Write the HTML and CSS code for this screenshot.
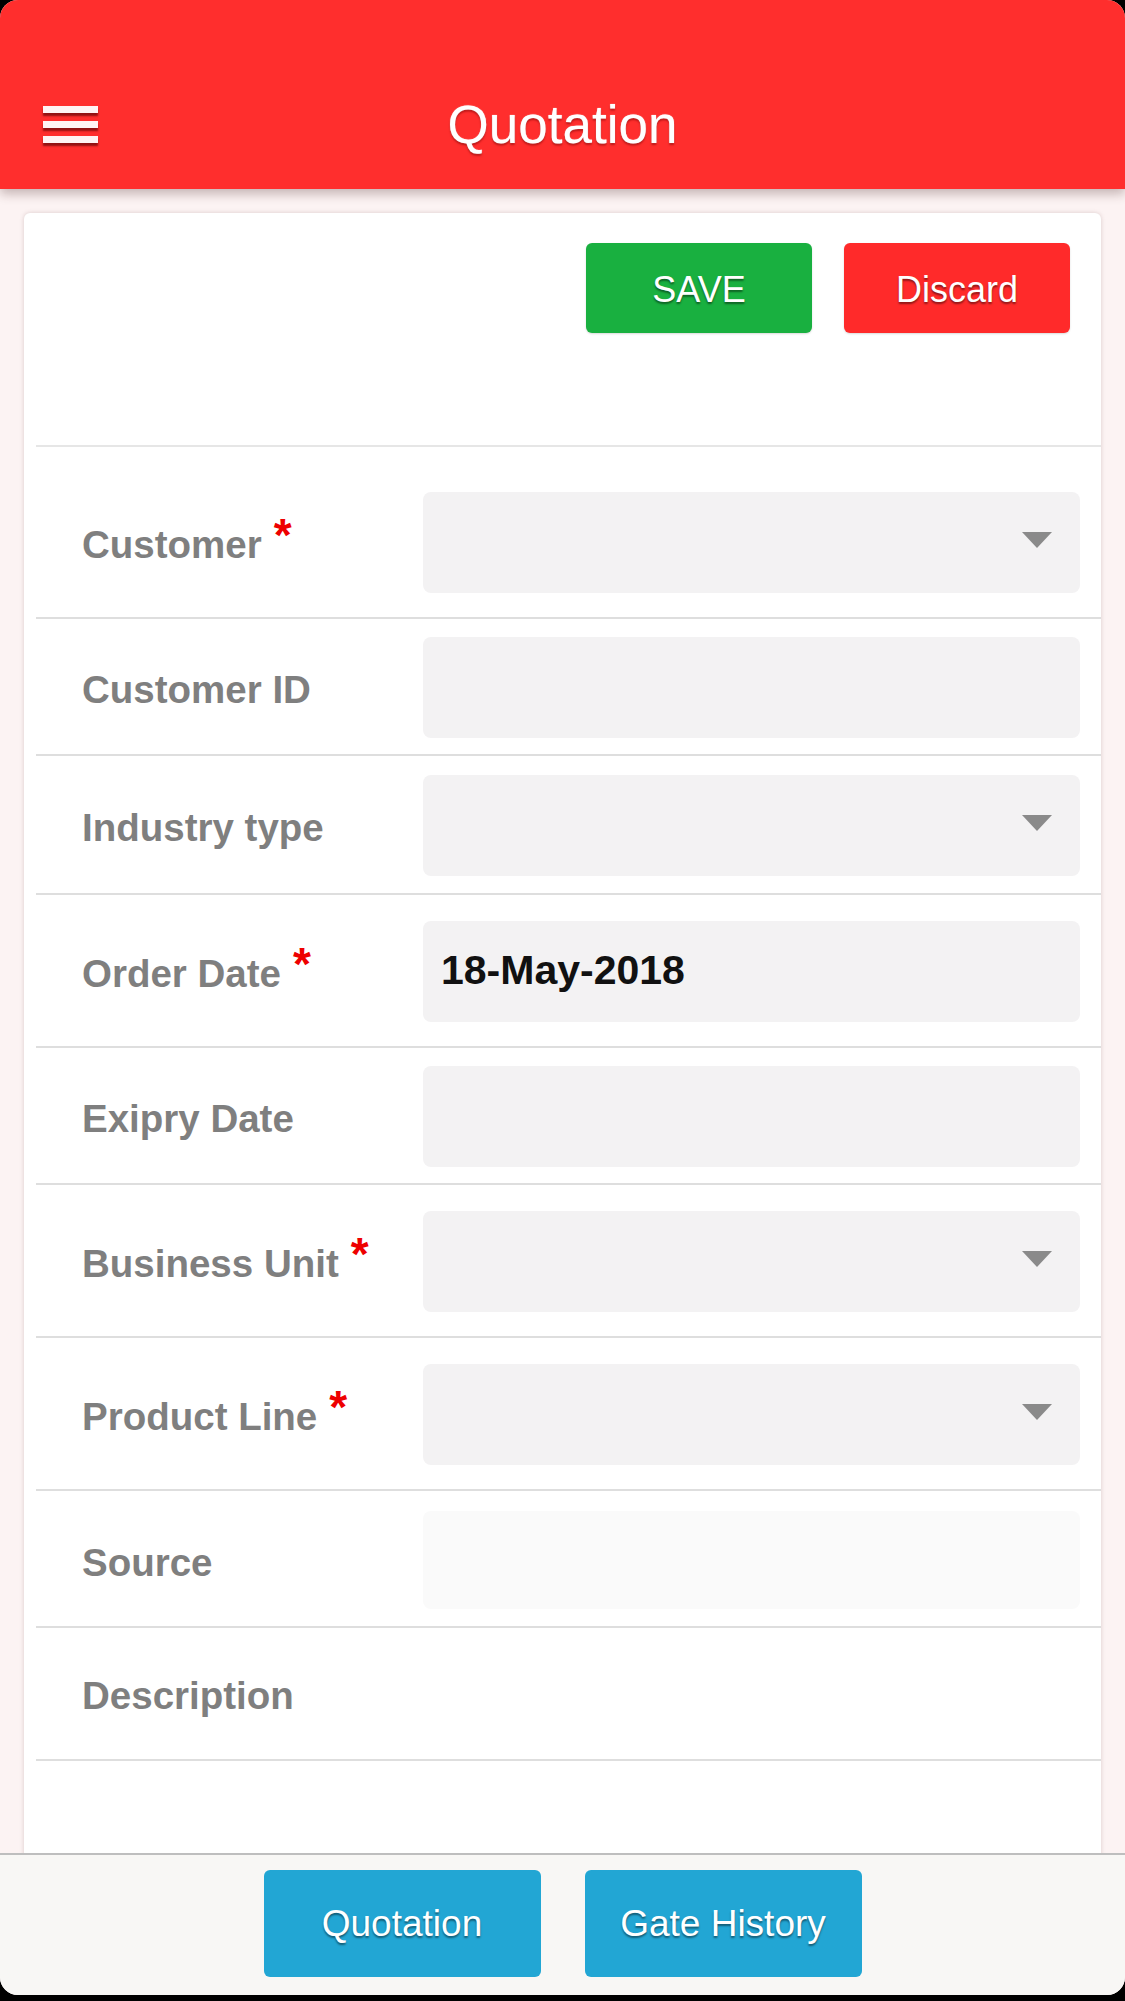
FILE: index.html
```html
<!DOCTYPE html>
<html lang="en">
<head>
<meta charset="utf-8">
<title>Quotation</title>
<link rel="stylesheet" href="styles.css">
</head>
<body>
<div class="screen">
  <header class="topbar">
    <button class="menu" aria-label="Menu"><span></span><span></span><span></span></button>
    <h1 class="topbar__title">Quotation</h1>
    <span class="topbar__spacer"></span>
  </header>

  <main class="content">
    <section class="card">
      <div class="actions">
        <button class="btn btn--save">SAVE</button>
        <button class="btn btn--discard">Discard</button>
      </div>

      <div class="fields">
        <div class="field field--req">
          <label class="field__label">Customer<sup class="req">*</sup></label>
          <div class="input input--select"><svg class="caret" viewBox="0 0 30 16"><polygon points="0,0 30,0 15,16"/></svg></div>
        </div>
        <div class="field">
          <label class="field__label">Customer ID</label>
          <div class="input"></div>
        </div>
        <div class="field field--wide">
          <label class="field__label">Industry type</label>
          <div class="input input--select"><svg class="caret" viewBox="0 0 30 16"><polygon points="0,0 30,0 15,16"/></svg></div>
        </div>
        <div class="field field--req">
          <label class="field__label">Order Date<sup class="req">*</sup></label>
          <div class="input input--value">18-May-2018</div>
        </div>
        <div class="field">
          <label class="field__label">Exipry Date</label>
          <div class="input"></div>
        </div>
        <div class="field field--req">
          <label class="field__label">Business Unit<sup class="req">*</sup></label>
          <div class="input input--select"><svg class="caret" viewBox="0 0 30 16"><polygon points="0,0 30,0 15,16"/></svg></div>
        </div>
        <div class="field field--req">
          <label class="field__label">Product Line<sup class="req">*</sup></label>
          <div class="input input--select"><svg class="caret" viewBox="0 0 30 16"><polygon points="0,0 30,0 15,16"/></svg></div>
        </div>
        <div class="field field--disabled">
          <label class="field__label">Source</label>
          <div class="input input--disabled"></div>
        </div>
        <div class="field field--text">
          <label class="field__label">Description</label>
        </div>
      </div>
    </section>
  </main>

  <footer class="tabbar">
    <button class="tab">Quotation</button>
    <button class="tab">Gate History</button>
  </footer>
</div>
</body>
</html>
```

FILE: styles.css
```css
* { box-sizing: border-box; }

html, body {
  margin: 0;
  padding: 0;
  background: #000;
}

body {
  font-family: "Liberation Sans", Arial, Helvetica, sans-serif;
}

.screen {
  width: 1125px;
  height: 1995px;
  border-radius: 18px;
  overflow: hidden;
  background: #fcf3f3;
  display: flex;
  flex-direction: column;
}

/* ---------- top bar ---------- */
.topbar {
  position: relative;
  z-index: 2;
  flex: 0 0 189px;
  background: #ff2e2d;
  box-shadow: 0 5px 10px rgba(60, 20, 20, 0.28);
  display: grid;
  grid-template-columns: 1fr auto 1fr;
  align-items: center;
  padding: 60px 0 0 43px;
}

.menu {
  width: 56px;
  height: 44px;
  padding: 0;
  border: 0;
  background: transparent;
  display: flex;
  flex-direction: column;
  justify-content: center;
  gap: 8px;
}

.menu span {
  display: block;
  width: 55px;
  height: 7px;
  background: #fff4f4;
  box-shadow: 0 3px 2px rgba(110, 10, 10, 0.75);
}

.topbar__title {
  margin: 0 43px 0 0;
  color: #fff;
  font-size: 53px;
  font-weight: normal;
  line-height: 1;
  text-shadow: 0 2px 2px rgba(120, 0, 0, 0.5), 0 0 1px rgba(255, 255, 255, 0.9);
}

/* ---------- content ---------- */
.content {
  flex: 1 1 auto;
  min-height: 0;
  overflow: hidden;
  padding: 24px 24px 0 24px;
}

.card {
  background: #fff;
  border-radius: 6px;
  box-shadow: 0 0 4px rgba(120, 80, 80, 0.25);
  padding-bottom: 200px;
}

.actions {
  display: flex;
  justify-content: flex-end;
  gap: 32px;
  padding: 30px 31px 112px 0;
}

.btn {
  width: 226px;
  height: 90px;
  border: 0;
  border-radius: 6px;
  color: #fff;
  font-family: inherit;
  font-size: 36px;
  padding-top: 4px;
  text-shadow: 0 2px 2px rgba(0, 0, 0, 0.45);
  box-shadow: 0 1px 2px rgba(0, 0, 0, 0.15);
}

.btn--save { background: #19b040; }
.btn--discard { background: #ff2a2a; }

.fields {
  margin-left: 12px;
  border-top: 2px solid #e6e6e6;
  padding-top: 19px;
}

.field {
  display: grid;
  grid-template-columns: 341px 1fr;
  align-items: center;
  padding: 18px 21px 16px 46px;
  border-bottom: 2px solid #dedede;
}

.field--wide {
  padding-top: 19px;
  padding-bottom: 17px;
}

.field--req {
  padding-top: 26px;
  padding-bottom: 24px;
}

.field--disabled {
  padding-top: 20px;
  padding-bottom: 17px;
}

.field--text {
  height: 133px;
  padding-top: 0;
  padding-bottom: 0;
}

.field__label {
  color: #7f7f7f;
  font-size: 38.5px;
  font-weight: bold;
  line-height: 1.15;
  padding-top: 6px;
}

.req {
  color: #ee0000;
  font-size: 46px;
  line-height: 0;
  margin-left: 12px;
  vertical-align: 7px;
}

.input {
  height: 101px;
  border-radius: 8px;
  background: #f3f2f3;
  display: flex;
  align-items: center;
  padding: 0 28px 0 18px;
}

.input--select { justify-content: flex-end; }

.input--disabled {
  height: 98px;
  background: #fafafa;
}

.input--value {
  color: #111;
  font-size: 41px;
  font-weight: bold;
  padding-bottom: 2px;
}

.caret {
  width: 30px;
  height: 16px;
  fill: #8a8a8a;
  margin-bottom: 6px;
}

/* ---------- bottom tabs ---------- */
.tabbar {
  flex: 0 0 142px;
  position: relative;
  z-index: 2;
  background: #f8f7f5;
  border-top: 2px solid #bebebe;
  display: flex;
  justify-content: center;
  align-items: flex-start;
  gap: 44px;
  padding-top: 15px;
}

.tab {
  width: 277px;
  height: 107px;
  border: 0;
  border-radius: 6px;
  background: #22a6d4;
  color: #fff;
  font-family: inherit;
  font-size: 37px;
  text-shadow: 0 2px 2px rgba(0, 0, 0, 0.45);
}
```
